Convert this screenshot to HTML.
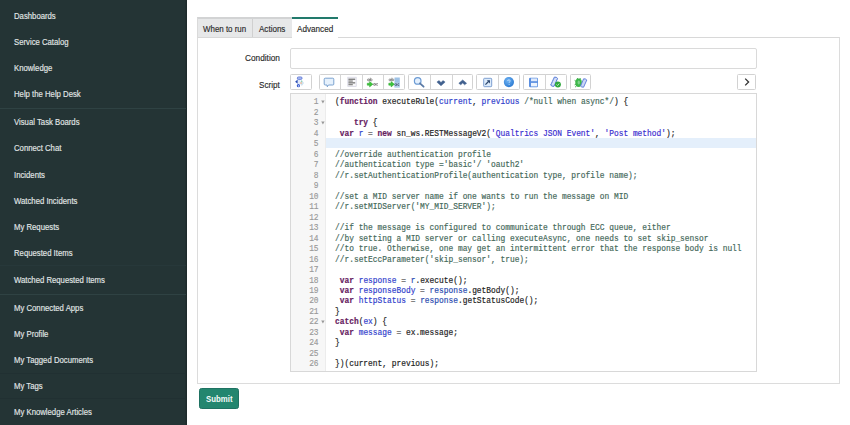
<!DOCTYPE html>
<html><head><meta charset="utf-8">
<style>
html,body{margin:0;padding:0;}
body{width:850px;height:425px;overflow:hidden;background:#fff;position:relative;font-family:"Liberation Sans",sans-serif;}
#side{position:absolute;left:0;top:0;width:187px;height:425px;background:#243435;box-shadow:inset -1.5px 0 0 #1e2b2c;}
.si{position:absolute;white-space:nowrap;font-size:8.8px;line-height:8.8px;color:#e2e7e7;-webkit-text-stroke:0.15px currentColor;transform:scaleX(0.88);transform-origin:0 0;}
.hl{position:absolute;left:0;width:186px;height:1px;}
.abs{position:absolute;}
.tab{position:absolute;top:17px;height:20px;box-sizing:border-box;background:#e7e8e9;border-top:2px solid #d2d3d4;}
.tt{position:absolute;white-space:nowrap;font-size:8.8px;line-height:8.8px;color:#2a2a2a;-webkit-text-stroke:0.15px currentColor;transform-origin:0 0;}
#panel{position:absolute;left:197px;top:37px;width:643px;height:347px;box-sizing:border-box;border:1px solid #dcdcdc;border-top-color:#d8d8d8;}
.lbl{position:absolute;white-space:nowrap;font-size:8.8px;line-height:8.8px;color:#2a2a2a;-webkit-text-stroke:0.15px currentColor;transform-origin:0 0;}
.inp{position:absolute;box-sizing:border-box;border:1px solid #dadada;border-radius:2px;background:#fff;}
.grp{position:absolute;top:74px;height:15.5px;box-sizing:border-box;border:1px solid #d2d2d2;border-radius:1.5px;background:#fff;}
.dv{position:absolute;top:74px;height:15.5px;width:1px;background:#d4d4d4;}
.ic{position:absolute;}
#ed{position:absolute;left:290px;top:93px;width:467px;height:279px;box-sizing:border-box;border:1px solid #d8d8d8;background:#fff;overflow:hidden;}
#gut{position:absolute;left:291px;top:94px;width:35px;height:277px;background:#f7f7f7;border-right:1px solid #ececec;box-sizing:border-box;}
#act{position:absolute;left:326px;top:137.8px;width:430px;height:9.9px;background:#e4effb;}
.cl{position:absolute;left:334.9px;white-space:pre;font-family:"Liberation Mono",monospace;font-size:8.7px;line-height:10.476px;color:#222;-webkit-text-stroke:0.18px currentColor;transform:scaleX(0.9068);transform-origin:0 0;}
.gn{position:absolute;left:280px;width:38.6px;text-align:right;font-family:"Liberation Mono",monospace;font-size:8.7px;line-height:10.476px;color:#999;-webkit-text-stroke:0.15px currentColor;transform:scaleX(0.9068);transform-origin:100% 0;}
.fm{position:absolute;left:320.6px;width:4px;height:4px;margin-top:3px;}
.k{color:#66215f;font-weight:bold;}
.d{color:#3040cc;}
.v{color:#2a4bb0;}
.s{color:#3a2ed0;}
.c{color:#45695a;}
.o{color:#666;}
#submit{position:absolute;left:199px;top:388px;width:39.5px;height:21px;box-sizing:border-box;background:#23866f;border:1px solid #1f7262;border-radius:2.5px;}
</style></head><body>
<div id="side">
<div class="si" style="left:13.7px;top:11.55px;">Dashboards</div>
<div class="si" style="left:13.7px;top:37.85px;">Service Catalog</div>
<div class="si" style="left:13.7px;top:64.15px;">Knowledge</div>
<div class="si" style="left:13.7px;top:90.25px;">Help the Help Desk</div>
<div class="si" style="left:13.7px;top:117.85px;">Visual Task Boards</div>
<div class="si" style="left:13.7px;top:144.05px;">Connect Chat</div>
<div class="si" style="left:13.7px;top:170.55px;">Incidents</div>
<div class="si" style="left:13.7px;top:196.85px;">Watched Incidents</div>
<div class="si" style="left:13.7px;top:223.05px;">My Requests</div>
<div class="si" style="left:13.7px;top:249.25px;">Requested Items</div>
<div class="si" style="left:13.7px;top:275.55px;">Watched Requested Items</div>
<div class="si" style="left:13.7px;top:303.85px;">My Connected Apps</div>
<div class="si" style="left:13.7px;top:329.95px;">My Profile</div>
<div class="si" style="left:13.7px;top:355.85px;">My Tagged Documents</div>
<div class="si" style="left:13.7px;top:381.85px;">My Tags</div>
<div class="si" style="left:13.7px;top:408.15px;">My Knowledge Articles</div>
<div class="hl" style="top:108.0px;background:#2f4243"></div>
<div class="hl" style="top:293.5px;background:#2f4243"></div>
<div class="hl" style="top:264.5px;background:#27383a"></div>
<div class="hl" style="top:373.0px;background:#213032"></div>
<div class="hl" style="top:397.5px;background:#213032"></div>
</div>

<!-- tabs -->
<div class="tab" style="left:197px;width:55.5px;border-left:1px solid #dadada;"></div>
<div class="abs" style="left:252px;top:19px;width:1px;height:18px;background:#d0d0d0"></div>
<div class="tab" style="left:253px;width:38.6px;"></div>
<div class="abs" style="left:291.6px;top:17px;width:46.4px;height:21px;background:#fff;"></div>
<div class="abs" style="left:291.6px;top:17px;width:46.4px;height:2px;background:#227a6c;"></div>
<div class="tt" style="left:203.2px;top:24.55px;transform:scaleX(0.9)">When to run</div>
<div class="tt" style="left:258.8px;top:24.65px;transform:scaleX(0.915)">Actions</div>
<div class="tt" style="left:297.4px;top:24.75px;transform:scaleX(0.925)">Advanced</div>

<div id="panel"></div>
<div class="abs" style="left:291.6px;top:36.5px;width:46.4px;height:2px;background:#fff;"></div>

<div class="lbl" style="left:244.9px;top:54.45px;transform:scaleX(0.94)">Condition</div>
<div class="lbl" style="left:259.3px;top:80.55px;transform:scaleX(0.92)">Script</div>
<div class="inp" style="left:289.7px;top:48.3px;width:467.2px;height:20.4px;"></div>

<!-- toolbar -->
<div class="grp" style="left:290px;width:21.6px;"></div>
<div class="grp" style="left:318.8px;width:86.6px;"></div>
<div class="dv" style="left:340.2px"></div><div class="dv" style="left:361.8px"></div><div class="dv" style="left:383.2px"></div>
<div class="grp" style="left:408.2px;width:65.2px;"></div>
<div class="dv" style="left:430.2px"></div><div class="dv" style="left:451.5px"></div>
<div class="grp" style="left:476.4px;width:43.4px;"></div>
<div class="dv" style="left:498.2px"></div>
<div class="grp" style="left:523.2px;width:43.4px;"></div>
<div class="dv" style="left:545px"></div>
<div class="grp" style="left:569.8px;width:21.7px;"></div>
<div class="grp" style="left:737.2px;width:19.3px;"></div>
<svg class="ic" style="left:743px;top:77px" width="8" height="10" viewBox="0 0 8 10"><path d="M2.2 1.6 L5.6 5 L2.2 8.4" fill="none" stroke="#333" stroke-width="1.3"/></svg>

<svg class="ic" style="left:288px;top:72px" width="24" height="20" viewBox="288 72 24 20">
 <path d="M301.8 80 L304 83 L301.8 85.9 L299.6 83 Z" fill="#cde2f0"/>
 <circle cx="300.9" cy="83" r="1" fill="#f2b88e"/>
 <circle cx="301.6" cy="81.3" r="0.7" fill="#8fd3a8"/>
 <rect x="297.4" y="79.2" width="3" height="5.4" fill="#dfe8fb"/>
 <rect x="297.3" y="76.9" width="4.8" height="2.5" rx="1.2" fill="#a9b9f0" stroke="#4c68d0" stroke-width="0.7"/>
 <path d="M297.6 79.6 L295.1 81.8 L297.6 83.8 Z" fill="#2a4db4"/>
 <circle cx="298.4" cy="85.7" r="1.6" fill="#3659cc"/>
 <circle cx="298.5" cy="85.9" r="0.6" fill="#e6eeff"/>
</svg>
<svg class="ic" style="left:318px;top:72px" width="22" height="18" viewBox="318 72 22 18">
 <path d="M325.2 78.2 H332.8 Q333.8 78.2 333.8 79.2 V84 Q333.8 85 332.8 85 H328.4 L327.3 86.8 L327 85 H325.2 Q324.2 85 324.2 84 V79.2 Q324.2 78.2 325.2 78.2 Z" fill="#e6f1fc" stroke="#6e98cb" stroke-width="0.9"/>
</svg>
<svg class="ic" style="left:344px;top:74px" width="16" height="16" viewBox="344 74 16 16">
 <rect x="347.8" y="77.2" width="8.4" height="9.2" fill="#f6f6f8" stroke="#d2d2e0" stroke-width="0.7"/>
 <rect x="348.4" y="78.6" width="6.8" height="1.3" fill="#777"/>
 <rect x="348.4" y="80.4" width="4.4" height="1.3" fill="#888"/>
 <rect x="348.4" y="82.2" width="6.8" height="1.3" fill="#777"/>
 <rect x="348.4" y="84" width="4.4" height="1.3" fill="#888"/>
</svg>
<svg class="ic" style="left:364px;top:74px" width="18" height="16" viewBox="364 74 18 16">
 <g fill="none" stroke="#757575" stroke-width="0.75"><circle cx="368.35" cy="79.90" r="0.95"/><path d="M369.35 78.9 V80.9"/><path d="M370.30 77.70 V80.9"/><circle cx="371.25" cy="79.90" r="0.95"/></g>
 <path d="M367.3 83.2 H369.6 V81.5 L372.9 84.2 L369.6 86.9 V85.2 H367.3 Z" fill="#3cc63c" stroke="#27a027" stroke-width="0.5" stroke-linejoin="round"/>
 <g fill="none" stroke="#6a6a6a" stroke-width="0.75"><circle cx="374.35" cy="84.40" r="0.95"/><path d="M375.35 83.4 V85.4"/><path d="M377.80 83.60 Q376.30 83.00 376.30 84.40 Q376.30 85.80 377.80 85.20"/></g>
</svg>
<svg class="ic" style="left:386px;top:74px" width="18" height="16" viewBox="386 74 18 16">
 <rect x="394.5" y="77.5" width="5.3" height="9.9" fill="#9ec2e6"/>
 <rect x="394.5" y="82.6" width="5.3" height="4.8" fill="#b8d2ee"/>
 <g fill="none" stroke="#757575" stroke-width="0.75"><circle cx="389.95" cy="79.90" r="0.95"/><path d="M390.95 78.9 V80.9"/><path d="M391.90 77.70 V80.9"/><circle cx="392.85" cy="79.90" r="0.95"/></g>
 <path d="M388.8 83.2 H391.1 V81.5 L394.4 84.2 L391.1 86.9 V85.2 H388.8 Z" fill="#3cc63c" stroke="#27a027" stroke-width="0.5" stroke-linejoin="round"/>
 <g fill="none" stroke="#4a5a78" stroke-width="0.75"><circle cx="395.75" cy="84.60" r="0.95"/><path d="M396.75 83.6 V85.6"/><path d="M399.20 83.80 Q397.70 83.20 397.70 84.60 Q397.70 86.00 399.20 85.40"/></g>
</svg>
<svg class="ic" style="left:410px;top:74px" width="18" height="16" viewBox="410 74 18 16">
 <circle cx="417.7" cy="80.9" r="3.3" fill="#e4f0fd" stroke="#6c9bd4" stroke-width="1.2"/>
 <path d="M420 83.3 L423.6 86.7" stroke="#5a7aa6" stroke-width="1.8" stroke-linecap="round"/>
</svg>
<svg class="ic" style="left:434px;top:76px" width="36" height="12" viewBox="434 76 36 12">
 <path d="M436.9 82.1 L439 80.6 L441 82.5 L443 80.6 L445.1 82.1 L441 85.8 Z" fill="#41608e" stroke="#41608e" stroke-width="0.5" stroke-linejoin="round"/>
 <path d="M458.8 83.3 L462.7 79.9 L466.6 83.3 L464.6 84.8 L462.7 83 L460.8 84.8 Z" fill="#41608e" stroke="#41608e" stroke-width="0.5" stroke-linejoin="round"/>
</svg>
<svg class="ic" style="left:480px;top:74px" width="16" height="16" viewBox="480 74 16 16">
 <rect x="483.7" y="78.3" width="8" height="8.4" rx="0.8" fill="#dcebfb" stroke="#7396cc" stroke-width="0.9"/>
 <path d="M485.4 84.6 L489 81" stroke="#2f4a70" stroke-width="1.3"/>
 <path d="M486.8 80.2 H490 V83.4 Z" fill="#2f4a70"/>
</svg>
<svg class="ic" style="left:502px;top:75px" width="14" height="14" viewBox="502 75 14 14">
 <defs><radialGradient id="hg" cx="0.4" cy="0.35" r="0.7"><stop offset="0" stop-color="#6fb4f4"/><stop offset="1" stop-color="#2a78d0"/></radialGradient></defs><circle cx="508.9" cy="82.1" r="5.1" fill="url(#hg)"/>
 <path d="M507.6 81 Q507.7 79.8 509 79.8 Q510.3 79.9 510.2 81 Q510.1 81.8 509.1 82.4 V83.1" fill="none" stroke="#cfe4fb" stroke-width="0.8"/>
 <circle cx="509.1" cy="84.4" r="0.5" fill="#cfe4fb"/>
</svg>
<svg class="ic" style="left:527px;top:76px" width="12" height="12" viewBox="527 76 12 12">
 <rect x="529" y="77.7" width="9" height="9.5" rx="1.2" fill="#5b8fe0"/>
 <rect x="531" y="78.4" width="6.2" height="2.8" fill="#dfeafb"/>
 <rect x="531" y="82.9" width="6.2" height="3.5" fill="#eef4fd"/>
</svg>
<svg class="ic" style="left:548px;top:75px" width="16" height="14" viewBox="548 75 16 14">
 <path d="M554.4 77.1 Q556.6 76.9 557.6 78.4 L554 86.3 Q551.8 86.6 550.7 85.1 Z" fill="#d3def8" stroke="#5479d6" stroke-width="1" stroke-linejoin="round"/><path d="M554.3 77.4 L551 84.8" stroke="#8aa4e6" stroke-width="0.7"/>
 <circle cx="557.9" cy="84.5" r="3" fill="#2fa83d"/>
 <path d="M556.6 84.5 L557.6 85.5 L559.2 83.6" fill="none" stroke="#e2f6e2" stroke-width="0.8"/>
</svg>
<svg class="ic" style="left:572px;top:75px" width="18" height="14" viewBox="572 75 18 14">
 <ellipse cx="578.6" cy="82.8" rx="3.3" ry="4.2" fill="#3db84a"/>
 <ellipse cx="578.8" cy="82.4" rx="1.2" ry="2" fill="#7fd08a"/>
 <path d="M574.6 80.4 L576 81.4 M574.6 84.8 L576 84 M577 78 L578 79.2 M580.6 78 L579.6 79.2 M575 87.2 L576.4 86" stroke="#2a9a35" stroke-width="0.8"/>
 <path d="M583.6 78.8 Q585.8 78.6 586.8 80 L583.6 87.2 Q581.4 87.4 580.6 86 Z" fill="#c9d6f6" stroke="#5877d8" stroke-width="0.9" stroke-linejoin="round"/>
</svg>

<div id="ed"></div>
<div id="gut"></div>
<div id="act"></div>
<div class="gn" style="top:97.450px">1</div>
<svg class="fm" style="top:97.450px" viewBox="0 0 4 4"><path d="M0.2 0.4 H3.6 L1.9 3.4 Z" fill="#999"/></svg>
<div class="gn" style="top:107.926px">2</div>
<div class="gn" style="top:118.402px">3</div>
<svg class="fm" style="top:118.402px" viewBox="0 0 4 4"><path d="M0.2 0.4 H3.6 L1.9 3.4 Z" fill="#999"/></svg>
<div class="gn" style="top:128.878px">4</div>
<div class="gn" style="top:139.354px">5</div>
<div class="gn" style="top:149.830px">6</div>
<div class="gn" style="top:160.306px">7</div>
<div class="gn" style="top:170.782px">8</div>
<div class="gn" style="top:181.258px">9</div>
<div class="gn" style="top:191.734px">10</div>
<div class="gn" style="top:202.210px">11</div>
<div class="gn" style="top:212.686px">12</div>
<div class="gn" style="top:223.162px">13</div>
<div class="gn" style="top:233.638px">14</div>
<div class="gn" style="top:244.114px">15</div>
<div class="gn" style="top:254.590px">16</div>
<div class="gn" style="top:265.066px">17</div>
<div class="gn" style="top:275.542px">18</div>
<div class="gn" style="top:286.018px">19</div>
<div class="gn" style="top:296.494px">20</div>
<div class="gn" style="top:306.970px">21</div>
<div class="gn" style="top:317.446px">22</div>
<svg class="fm" style="top:317.446px" viewBox="0 0 4 4"><path d="M0.2 0.4 H3.6 L1.9 3.4 Z" fill="#999"/></svg>
<div class="gn" style="top:327.922px">23</div>
<div class="gn" style="top:338.398px">24</div>
<div class="gn" style="top:348.874px">25</div>
<div class="gn" style="top:359.350px">26</div>
<div class="cl" style="top:97.450px">(<span class="k">function</span> executeRule(<span class="d">current</span>, <span class="d">previous</span> <span class="c">/*null when async*/</span>) {</div>
<div class="cl" style="top:107.926px"></div>
<div class="cl" style="top:118.402px">    <span class="k">try</span> {</div>
<div class="cl" style="top:128.878px"> <span class="k">var</span> <span class="d">r</span> <span class="o">=</span> <span class="k">new</span> sn_ws.RESTMessageV2(<span class="s">&#x27;Qualtrics JSON Event&#x27;</span>, <span class="s">&#x27;Post method&#x27;</span>);</div>
<div class="cl" style="top:139.354px"></div>
<div class="cl" style="top:149.830px"><span class="c">//override authentication profile</span></div>
<div class="cl" style="top:160.306px"><span class="c">//authentication type =&#x27;basic&#x27;/ &#x27;oauth2&#x27;</span></div>
<div class="cl" style="top:170.782px"><span class="c">//r.setAuthenticationProfile(authentication type, profile name);</span></div>
<div class="cl" style="top:181.258px"></div>
<div class="cl" style="top:191.734px"><span class="c">//set a MID server name if one wants to run the message on MID</span></div>
<div class="cl" style="top:202.210px"><span class="c">//r.setMIDServer(&#x27;MY_MID_SERVER&#x27;);</span></div>
<div class="cl" style="top:212.686px"></div>
<div class="cl" style="top:223.162px"><span class="c">//if the message is configured to communicate through ECC queue, either</span></div>
<div class="cl" style="top:233.638px"><span class="c">//by setting a MID server or calling executeAsync, one needs to set skip_sensor</span></div>
<div class="cl" style="top:244.114px"><span class="c">//to true. Otherwise, one may get an intermittent error that the response body is null</span></div>
<div class="cl" style="top:254.590px"><span class="c">//r.setEccParameter(&#x27;skip_sensor&#x27;, true);</span></div>
<div class="cl" style="top:265.066px"></div>
<div class="cl" style="top:275.542px"> <span class="k">var</span> <span class="d">response</span> <span class="o">=</span> <span class="v">r</span>.execute();</div>
<div class="cl" style="top:286.018px"> <span class="k">var</span> <span class="d">responseBody</span> <span class="o">=</span> <span class="v">response</span>.getBody();</div>
<div class="cl" style="top:296.494px"> <span class="k">var</span> <span class="d">httpStatus</span> <span class="o">=</span> <span class="v">response</span>.getStatusCode();</div>
<div class="cl" style="top:306.970px">}</div>
<div class="cl" style="top:317.446px"><span class="k">catch</span>(<span class="d">ex</span>) {</div>
<div class="cl" style="top:327.922px"> <span class="k">var</span> <span class="d">message</span> <span class="o">=</span> ex.message;</div>
<div class="cl" style="top:338.398px">}</div>
<div class="cl" style="top:348.874px"></div>
<div class="cl" style="top:359.350px">})(current, previous);</div>

<div id="submit"></div>
<div class="abs" style="left:205.8px;top:395.2px;white-space:nowrap;font-size:8.6px;line-height:8.6px;color:#f4fbf9;font-weight:bold;transform:scaleX(0.91);transform-origin:0 0;">Submit</div>
</body></html>
